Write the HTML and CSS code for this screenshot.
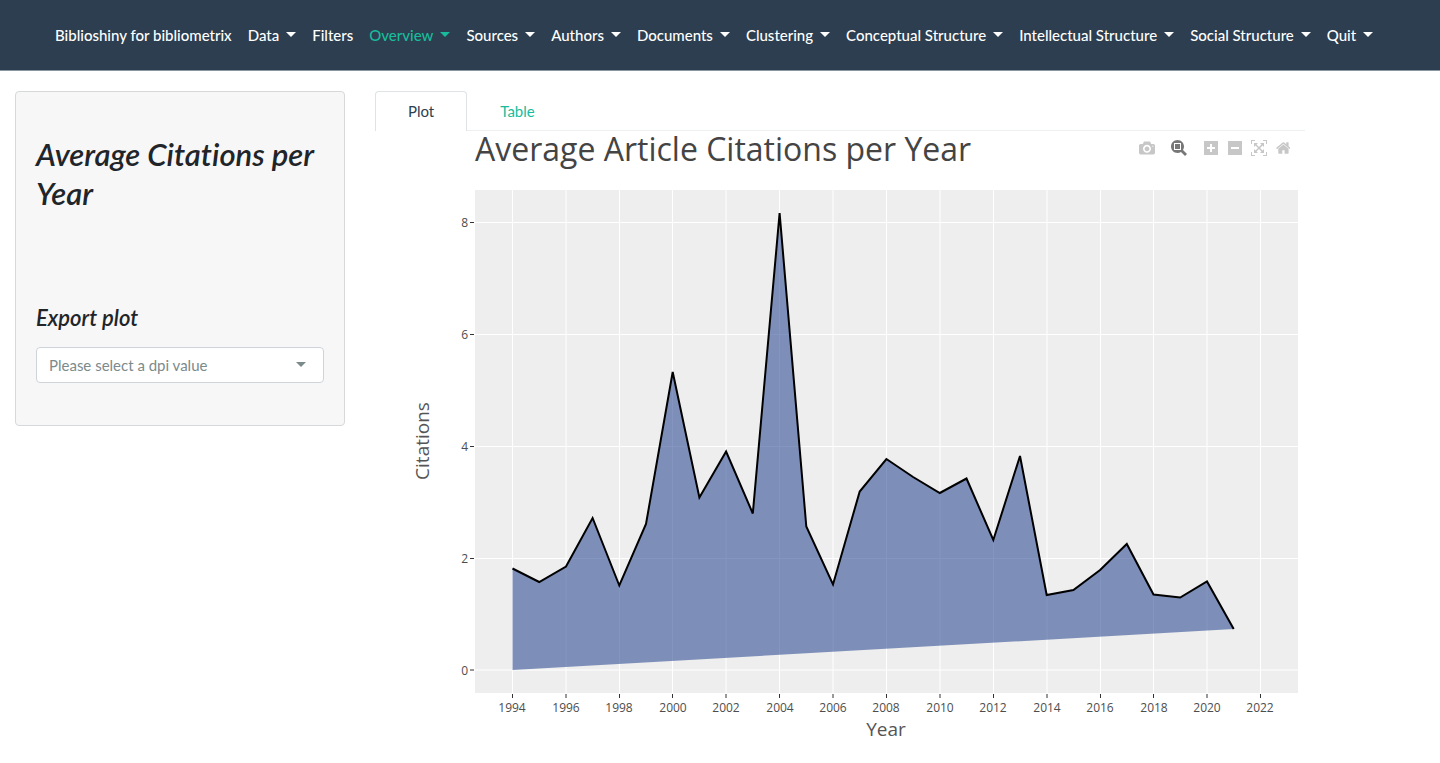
FILE: index.html
```html
<!DOCTYPE html>
<html lang="en">
<head>
<meta charset="utf-8">
<meta name="viewport" content="width=device-width, initial-scale=1">
<title>Biblioshiny for bibliometrix</title>
<link rel="stylesheet" href="styles.css">
</head>
<body>
<nav class="navbar">
  <a class="nav-link" href="#">Biblioshiny for bibliometrix</a>
  <button class="nav-link caret" type="button">Data</button>
  <a class="nav-link" href="#">Filters</a>
  <button class="nav-link caret active" type="button">Overview</button>
  <button class="nav-link caret" type="button">Sources</button>
  <button class="nav-link caret" type="button">Authors</button>
  <button class="nav-link caret" type="button">Documents</button>
  <button class="nav-link caret" type="button">Clustering</button>
  <button class="nav-link caret" type="button">Conceptual Structure</button>
  <button class="nav-link caret" type="button">Intellectual Structure</button>
  <button class="nav-link caret" type="button">Social Structure</button>
  <button class="nav-link caret" type="button">Quit</button>
</nav>
<div class="layout">
  <aside class="well">
    <h1 class="well-title">Average Citations per Year</h1>
    <h2 class="well-subtitle"><label for="dpi">Export plot</label></h2>
    <div class="select-box">
      <select class="select" id="dpi">
        <option>Please select a dpi value</option>
        <option>75</option>
        <option>150</option>
        <option>300</option>
        <option>600</option>
      </select>
    </div>
  </aside>
  <main class="content">
    <div class="tabs">
      <button class="tab tab-active" type="button">Plot</button>
      <button class="tab" type="button">Table</button>
    </div>
    <div class="plot">
      <div class="modebar">
        <button class="tool tool-group" type="button" aria-label="Download plot as a png"><svg viewBox="0 0 1000 1000"><path transform="matrix(1 0 0 -1 0 850)" d="m500 450c-83 0-150-67-150-150 0-83 67-150 150-150 83 0 150 67 150 150 0 83-67 150-150 150z m400 150h-120c-16 0-34 13-39 29l-31 93c-6 15-23 28-40 28h-340c-16 0-34-13-39-28l-31-94c-6-15-23-28-40-28h-120c-55 0-100-45-100-100v-450c0-55 45-100 100-100h800c55 0 100 45 100 100v450c0 55-45 100-100 100z m-400-550c-138 0-250 112-250 250 0 138 112 250 250 250 138 0 250-112 250-250 0-138-112-250-250-250z m365 380c-19 0-35 16-35 35 0 19 16 35 35 35 19 0 35-16 35-35 0-19-16-35-35-35z"/></svg></button>
        <button class="tool tool-group tool-on" type="button" aria-label="Zoom"><svg viewBox="0 0 1000 1000"><path transform="matrix(1 0 0 -1 0 850)" d="m1000-25l-250 251c40 63 63 138 63 218 0 224-182 406-407 406-224 0-406-182-406-406s183-406 407-406c80 0 155 22 218 62l250-250 125 125z m-812 250l0 438 437 0 0-438-437 0z m62 375l313 0 0-312-313 0 0 312z"/></svg></button>
        <button class="tool" type="button" aria-label="Zoom in"><svg viewBox="0 0 875 1000"><path transform="matrix(1 0 0 -1 0 850)" d="m1 787l0-875 875 0 0 875-875 0z m687-500l-187 0 0-187-125 0 0 187-188 0 0 125 188 0 0 187 125 0 0-187 187 0 0-125z"/></svg></button>
        <button class="tool" type="button" aria-label="Zoom out"><svg viewBox="0 0 875 1000"><path transform="matrix(1 0 0 -1 0 850)" d="m0 788l0-876 875 0 0 876-875 0z m688-500l-500 0 0 125 500 0 0-125z"/></svg></button>
        <button class="tool" type="button" aria-label="Autoscale"><svg viewBox="0 0 1000 1000"><path transform="matrix(1 0 0 -1 0 850)" d="m250 850l-187 0-63 0 0-62 0-188 63 0 0 188 187 0 0 62z m688 0l-188 0 0-62 188 0 0-188 62 0 0 188 0 62-62 0z m-875-938l0 188-63 0 0-188 0-62 63 0 187 0 0 62-187 0z m875 188l0-188-188 0 0-62 188 0 62 0 0 62 0 188-62 0z m-125 188l-1 0-93-94-156 156 156 156 92-93 2 0 0 250-250 0 0-2 93-92-156-156-156 156 94 92 0 2-250 0 0-250 0 0 93 93 157-156-157-156-93 94 0 0 0-250 250 0 0 0-94 93 156 157 156-157-93-93 0 0 250 0 0 250z"/></svg></button>
        <button class="tool" type="button" aria-label="Reset axes"><svg viewBox="0 0 928 1000"><path transform="matrix(1 0 0 -1 0 850)" d="m786 296v-267q0-15-11-26t-25-10h-214v214h-143v-214h-214q-15 0-25 10t-11 26v267q0 1 0 2t0 2l321 264 321-264q1-1 1-4z m124 39l-34-41q-5-5-12-6h-2q-7 0-12 3l-386 322-386-322q-7-4-13-4-7 2-12 7l-35 41q-4 5-3 13t6 12l401 334q18 15 42 15t43-15l136-114v109q0 8 5 13t13 5h107q8 0 13-5t5-13v-227l122-102q5-5 6-12t-4-13z"/></svg></button>
      </div>
      <svg class="chart" viewBox="0 0 930 624" role="img" aria-label="Average Article Citations per Year">
        <rect class="panel" x="100" y="59" width="823" height="503"/>
        <path class="grid" d="M100 91.5H923M100 203.5H923M100 315.5H923M100 427.5H923M100 539H923M137.5 59V562M191 59V562M244.500 59V562M297.500 59V562M351 59V562M404.500 59V562M458 59V562M511.500 59V562M565 59V562M618.500 59V562M672 59V562M725.500 59V562M778.500 59V562M832 59V562M885.500 59V562"/>
        <path class="area" d="M137.500 437.500L164.200 451L191 435.500L217.600 387L244.300 454.500L271 393L297.700 241L324.400 366.500L351.100 320.500L377.800 382.500L404.600 82L431.300 395.500L458 453.500L484.700 360.500L511.400 328L538.100 346L564.800 362L591.500 347.500L618.300 409L645 325L671.700 464L698.400 459L725.100 439L751.800 413L778.500 463.500L805.200 466.500L832 450.500L858.700 498L137.500 539Z"/>
        <path class="line" d="M137.500 437.500L164.200 451L191 435.500L217.600 387L244.300 454.500L271 393L297.700 241L324.400 366.500L351.100 320.500L377.800 382.500L404.600 82L431.300 395.500L458 453.500L484.700 360.500L511.400 328L538.100 346L564.800 362L591.500 347.500L618.300 409L645 325L671.700 464L698.400 459L725.100 439L751.800 413L778.500 463.500L805.200 466.500L832 450.500L858.700 498"/>
        <path class="ticks" d="M95 91.500H99M95 203.500H99M95 315.500H99M95 427.500H99M95 539H99M137.500 563V567M191 563V567M244.500 563V567M297.500 563V567M351 563V567M404.500 563V567M458 563V567M511.500 563V567M565 563V567M618.500 563V567M672 563V567M725.500 563V567M778.500 563V567M832 563V567M885.500 563V567"/>
        <g class="tick-text end">
          <text x="93" y="96">8</text><text x="93" y="208">6</text><text x="93" y="320">4</text><text x="93" y="432">2</text><text x="93" y="544">0</text>
        </g>
        <g class="tick-text middle">
          <text x="137" y="581">1994</text><text x="191" y="581">1996</text><text x="244" y="581">1998</text><text x="298" y="581">2000</text><text x="351" y="581">2002</text><text x="405" y="581">2004</text><text x="458" y="581">2006</text><text x="511" y="581">2008</text><text x="565" y="581">2010</text><text x="618" y="581">2012</text><text x="672" y="581">2014</text><text x="725" y="581">2016</text><text x="779" y="581">2018</text><text x="832" y="581">2020</text><text x="885" y="581">2022</text>
        </g>
        <text class="chart-title" x="100" y="30">Average Article Citations per Year</text>
        <text class="axis-title" x="511" y="605">Year</text>
        <text class="axis-title" transform="translate(54 310) rotate(-90)">Citations</text>
      </svg>
    </div>
  </main>
</div>
</body>
</html>
```

FILE: styles.css
```css
*, *::before, *::after { box-sizing: border-box; }

body {
  margin: 0;
  background: #fff;
  color: #212529;
  font-family: Lato, "Liberation Sans", sans-serif;
  font-size: 15px;
  font-variant-ligatures: none;
  line-height: 22px;
}

button, select { font: inherit; }

.navbar {
  display: flex;
  align-items: center;
  min-height: 71px;
  padding: 0 47px;
  background: #2c3e50;
  border-bottom: 1px solid #8a96a1;
}

.nav-link {
  padding: 8px;
  border: 0;
  background: none;
  color: #fff;
  font-size: 15px;
  font-weight: 500;
  text-decoration: none;
  white-space: nowrap;
  cursor: pointer;
}

.nav-link.active { color: #18bc9c; }

.caret::after {
  content: "";
  display: inline-block;
  margin-left: 7px;
  vertical-align: 4px;
  border: 5px solid transparent;
  border-top-color: currentColor;
  border-bottom: 0;
}

.layout {
  display: grid;
  grid-template-columns: 3fr 8fr 1fr;
  padding-top: 20px;
}

.well {
  align-self: start;
  margin: 0 15px;
  padding: 43px 20px 42px;
  background: #f7f7f7;
  border: 1px solid #d6d8da;
  border-radius: 4px;
}

.well-title, .well-subtitle {
  font-style: italic;
  font-weight: 600;
}

.well-title { margin: 0 0 90px; font-size: 31px; line-height: 39px; }
.well-subtitle { margin: 0 0 14px; font-size: 22px; line-height: 30px; }

.select-box { position: relative; }

.select-box::after {
  content: "";
  position: absolute;
  top: 15px;
  right: 18px;
  border: 5px solid transparent;
  border-top-color: #7b8a8b;
  border-bottom: 0;
  pointer-events: none;
}

.select {
  appearance: none;
  display: block;
  width: 100%;
  height: 36px;
  padding: 0 12px;
  color: #7b8a8b;
  background: #fff;
  border: 1px solid #ced4da;
  border-radius: 4px;
}

.content { margin: 0 15px; min-width: 0; }

.tabs { display: flex; border-bottom: 1px solid #ecf0f1; }

.tab {
  margin-bottom: -1px;
  padding: 8px 32px 9px;
  border: 1px solid transparent;
  border-bottom: 0;
  border-radius: 4px 4px 0 0;
  background: none;
  color: #18bc9c;
}

.tab-active { background: #fff; border-color: #dfe3e5; color: #2c3e50; }

.plot { position: relative; }

.modebar {
  position: absolute;
  z-index: 1;
  top: 7px;
  right: 10px;
  display: flex;
}

.tool {
  width: 24px;
  height: 20px;
  padding: 0 4px;
  border: 0;
  background: none;
}

.tool-group { margin-right: 8px; }
.tool svg { display: block; height: 16px; margin: auto; fill: #c7c7c7; }
.tool-on svg { fill: #777; }

.chart {
  display: block;
  width: 100%;
  height: auto;
  overflow: visible;
  font-family: "Open Sans", "Noto Sans", sans-serif;
}

.panel { fill: #eee; }
.grid { stroke: #fff; fill: none; }
.area { fill: #264791; fill-opacity: 0.57; }
.line { fill: none; stroke: #000; stroke-width: 2; }
.ticks { stroke: #333; fill: none; }
.tick-text { font-size: 12px; fill: #4d4d4d; }
.end { text-anchor: end; }
.middle, .axis-title { text-anchor: middle; }
.chart-title { font-size: 32px; fill: #444; }
.axis-title { font-size: 19px; fill: #555; }
```
